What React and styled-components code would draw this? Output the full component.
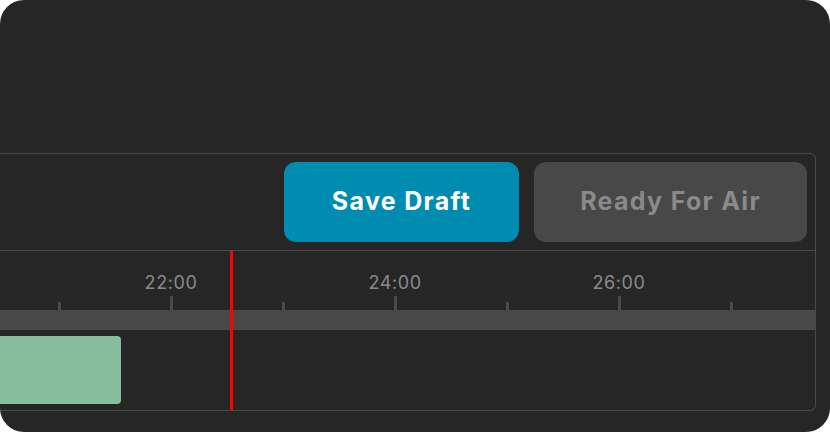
import React from 'react';
import styled, { createGlobalStyle } from 'styled-components';

const GlobalStyle = createGlobalStyle`
  html, body {
    margin: 0;
    padding: 0;
    background: #ffffff;
  }
  body {
    font-family: 'Inter', 'Noto Sans', sans-serif;
  }
`;

const Frame = styled.div`
  width: 830px;
  height: 432px;
  background: #262626;
  border-radius: 24px;
  overflow: hidden;
  box-sizing: border-box;
  padding: 153px 14px 21px 0;
  display: flex;
`;

const Panel = styled.div`
  flex: 1;
  display: flex;
  flex-direction: column;
  border: 1px solid #4a4a4a;
  border-left: none;
  border-radius: 0 6px 6px 0;
`;

const Toolbar = styled.div`
  display: flex;
  justify-content: flex-end;
  gap: 15px;
  padding: 8px 8px 8px 0;
  border-bottom: 1px solid #4a4a4a;
`;

const Button = styled.button`
  height: 80px;
  width: ${({ $width }) => $width}px;
  border: none;
  border-radius: 12px;
  padding: 0 0 3px;
  background: ${({ $primary }) => ($primary ? '#008bb0' : '#484848')};
  color: ${({ $primary }) => ($primary ? '#ffffff' : '#8a8a8a')};
  font-family: 'Inter', sans-serif;
  font-weight: 700;
  font-size: 25px;
  letter-spacing: 1.3px;
  cursor: pointer;
`;

const Timeline = styled.div`
  position: relative;
  flex: 1;
  display: flex;
  flex-direction: column;
`;

const Ruler = styled.div`
  height: 59px;
  display: flex;
  align-items: stretch;
  padding-left: 3px;
`;

const Cell = styled.div`
  width: 112px;
  flex: none;
  display: flex;
  flex-direction: column;
  align-items: center;
  justify-content: flex-end;
`;

const Label = styled.div`
  font-family: 'Inter', sans-serif;
  font-size: 18px;
  line-height: 20px;
  color: #8a8a8a;
  margin-bottom: 3px;
  letter-spacing: 0.6px;
`;

const Tick = styled.div`
  width: 3px;
  height: ${({ $major }) => ($major ? 14 : 8)}px;
  background: #4a4a4a;
`;

const Bar = styled.div`
  height: 20px;
  background: #484848;
`;

const Track = styled.div`
  position: relative;
  flex: 1;
`;

const Clip = styled.div`
  position: absolute;
  top: 6px;
  bottom: 6px;
  left: 0;
  width: 121px;
  background: #86bd9c;
  border-radius: 0 4px 4px 0;
`;

const Playhead = styled.div`
  position: absolute;
  top: 0;
  bottom: 0;
  left: 230px;
  width: 3px;
  background: #ff0000;
`;

const cells = [
  { major: false },
  { major: true, label: '22:00' },
  { major: false },
  { major: true, label: '24:00' },
  { major: false },
  { major: true, label: '26:00' },
  { major: false },
];

export default function App() {
  return (
    <>
      <GlobalStyle />
      <Frame>
        <Panel>
          <Toolbar>
            <Button $primary $width={235}>Save Draft</Button>
            <Button $width={273}>Ready For Air</Button>
          </Toolbar>
          <Timeline>
            <Ruler>
              {cells.map((c, i) => (
                <Cell key={i}>
                  {c.label && <Label>{c.label}</Label>}
                  <Tick $major={c.major} />
                </Cell>
              ))}
            </Ruler>
            <Bar />
            <Track>
              <Clip />
            </Track>
            <Playhead />
          </Timeline>
        </Panel>
      </Frame>
    </>
  );
}
